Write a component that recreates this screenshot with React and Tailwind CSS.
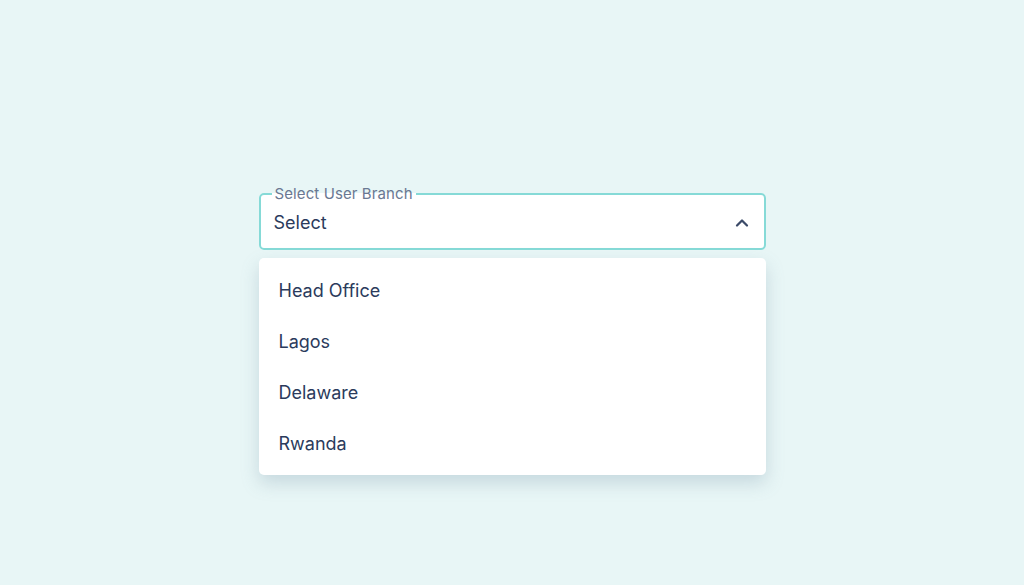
import { ChevronUp } from 'lucide-react'

const branches = ['Head Office', 'Lagos', 'Delaware', 'Rwanda']

export default function App() {
  return (
    <div
      className="min-h-screen w-full bg-[#e8f6f6] flex flex-col items-center pt-[185px]"
      style={{ fontFamily: 'Inter, "Noto Sans", sans-serif' }}
    >
      <div className="w-[507px]">
        {/* notched outline */}
        <fieldset className="border-2 border-[#86dad7] rounded-[5px] bg-white px-[13px] m-0 h-[65px] flex">
          <legend className="px-[3px] ml-[-2px] text-[15px] leading-[18px] tracking-[0.1px] text-[#6a7892]">
            Select User Branch
          </legend>
          <div className="flex w-full items-center justify-between pb-[6px]">
            <span className="text-[18px] text-[#2b3b5c]">Select</span>
            <ChevronUp size={20} strokeWidth={2.7} className="text-[#3b4a68] mr-[-1px]" />
          </div>
        </fieldset>

        <div className="mt-[8px] bg-white rounded-[5px] shadow-[0_8px_18px_rgba(110,140,160,0.28)] pt-[7px] pb-[6px]">
          {branches.map((b) => (
            <div key={b} className="h-[51px] flex items-center px-[20px] text-[18px] text-[#2b3b5c]">
              {b}
            </div>
          ))}
        </div>
      </div>
    </div>
  )
}
